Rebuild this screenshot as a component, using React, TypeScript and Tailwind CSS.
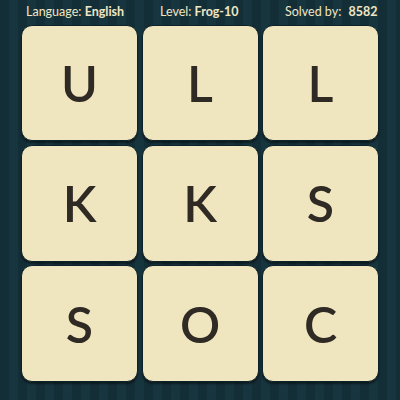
const letters = ["U", "L", "L", "K", "K", "S", "S", "O", "C"];

export default function App() {
  return (
    <div className="w-[400px] h-[400px] overflow-hidden bg-[#15303a] bg-[repeating-linear-gradient(90deg,#142e37_0px,#142e37_9px,#17353f_9px,#17353f_18px)] font-['Lato','Noto_Sans',sans-serif]">
      <div className="h-[25px] flex items-center text-[12.5px] text-[#efe6c4]">
        <span className="w-[160px] shrink-0 pl-[26px]">
          Language: <b className="font-bold">English</b>
        </span>
        <span className="w-[125px] shrink-0">
          Level: <b className="font-bold">Frog-10</b>
        </span>
        <span className="shrink-0">
          Solved by: <b className="font-bold ml-1">8582</b>
        </span>
      </div>
      <div className="grid grid-cols-[117px_117px_117px] grid-rows-[116px_117px_117px] gap-[3.5px] ml-[21px]">
        {letters.map((l, i) => (
          <div
            key={i}
            className="rounded-[11px] bg-[#efe6bf] border border-[#0e2229] shadow-[0_2px_2px_rgba(0,0,0,0.45)] flex items-center justify-center text-[50px] font-semibold text-[#2f2a24] leading-none"
          >
            {l}
          </div>
        ))}
      </div>
    </div>
  );
}
